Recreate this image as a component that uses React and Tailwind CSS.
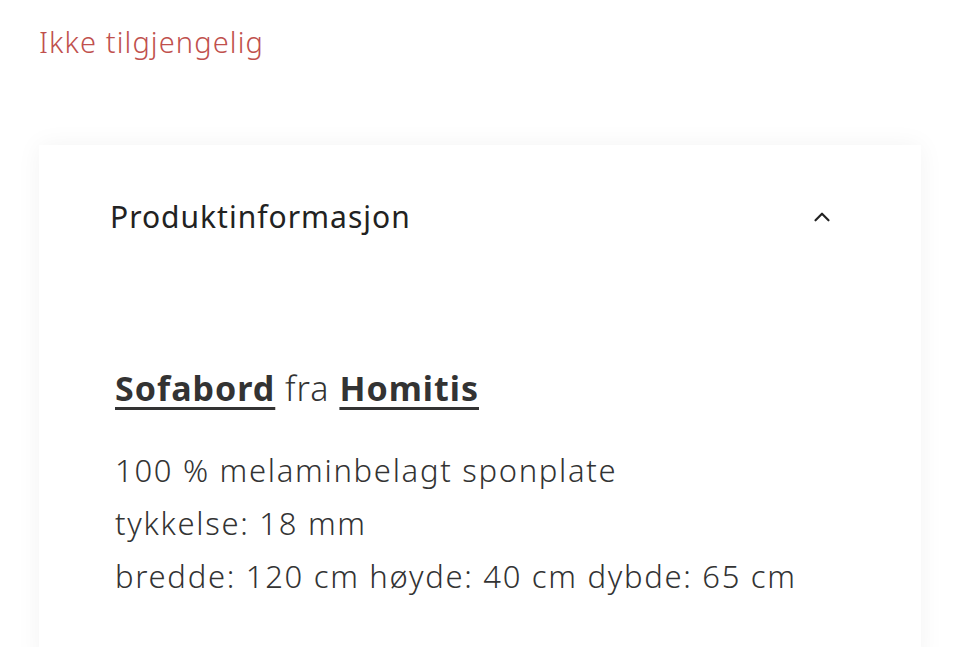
import React from 'react';
import { ChevronUp } from 'lucide-react';

export default function App() {
  return (
    <div className="h-[647px] overflow-hidden bg-white font-['Noto_Sans',sans-serif] text-[#333]">
      <div className="px-[39px] pt-[22px]">
        <p className="text-[29px] leading-[40px] font-light tracking-[1.1px] text-[#c0504d]">Ikke tilgjengelig</p>
      </div>
      <div className="mx-[39px] mt-[83px] bg-white shadow-[0_0_24px_rgba(0,0,0,0.05)] h-[520px]">
        <div className="flex items-center justify-between pl-[71px] pr-[86px] pt-[52px]">
          <h2 className="text-[30px] leading-[40px] tracking-[1px] text-[#222]">Produktinformasjon</h2>
          <ChevronUp size={26} strokeWidth={2} className="text-[#222]" />
        </div>
        <div className="pl-[76px] pt-[129px]">
          <h3 className="text-[34px] leading-[44px] tracking-[1px] text-[#333]">
            <a href="#" className="font-bold underline underline-offset-[6px] decoration-[3px]">Sofabord</a>
            {' '}<span className="font-light">fra</span>{' '}
            <a href="#" className="font-bold underline underline-offset-[6px] decoration-[3px]">Homitis</a>
          </h3>
          <div className="mt-[34px] text-[31px] leading-[53px] font-light tracking-[1.7px] text-[#333]">
            <p>100 % melaminbelagt sponplate</p>
            <p>tykkelse: 18 mm</p>
            <p>bredde: 120 cm høyde: 40 cm dybde: 65 cm</p>
          </div>
        </div>
      </div>
    </div>
  );
}
